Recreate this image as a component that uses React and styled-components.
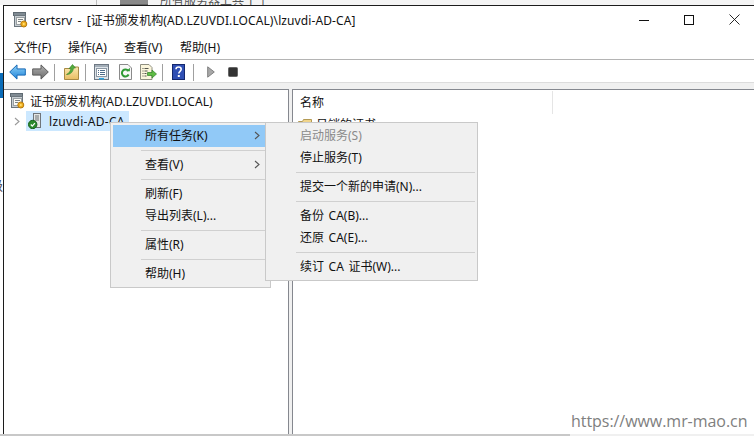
import React from "react";
import styled, { createGlobalStyle } from "styled-components";

const Global = createGlobalStyle`
  html, body { margin: 0; padding: 0; background: #fff; }
  body { width: 754px; height: 436px; overflow: hidden; font-family: "Noto Sans", "Noto Sans CJK SC", sans-serif; font-size: 12px; color: #111; }
  #root { width: 754px; height: 436px; }
`;
const Page = styled.div`position: relative; width: 754px; height: 436px; display: flex; flex-direction: column; overflow: hidden; background: #fff;`;
const BackTop = styled.div`height: 5px; flex: none; display: flex; align-items: flex-end; overflow: hidden; background: #f4f4f4; padding-left: 96px;`;
const BackRule = styled.div`width: 1px; height: 5px; background: #bdbdbd; margin-right: 23px;`;
const BackIcon = styled.div`width: 28px; height: 5px; background: #8a8a8a; margin-right: 12px; border-bottom: 1px solid #666; box-sizing: border-box;`;
const BackText = styled.div`font-size: 12px; line-height: 14px; color: #555; white-space: nowrap; flex: none; margin-bottom: -3px;`;
const Middle = styled.div`flex: 1; min-height: 0; display: flex;`;
const BackLeft = styled.div`width: 3px; flex: none; display: flex; flex-direction: column; align-items: flex-end; overflow: hidden; background: #fff;`;
const BackBlue = styled.div`width: 3px; height: 25px; margin-top: 68px; background: #0b6cb8; flex: none;`;
const BackGlyph = styled.div`margin-top: 79px; font-size: 13px; line-height: 16px; color: #445; flex: none; width: 13px;`;
const Win = styled.div`flex: 1; min-width: 0; display: flex; flex-direction: column; background: #fff; border-top: 1px solid #1c1c1c; border-left: 1px solid #1c1c1c;`;
const TitleBar = styled.div`height: 28px; flex: none; display: flex; align-items: center; padding-left: 9px;`;
const TitleText = styled.div`margin-left: 5px; font-size: 12px; letter-spacing: 0.1px; word-spacing: 2px; white-space: nowrap; flex: 1; margin-top: -1px;`;
const WinButtons = styled.div`display: flex; align-items: center; gap: 35px; padding-right: 14px; margin-top: -1px;`;
const MenuBar = styled.div`height: 25px; flex: none; display: flex; align-items: center; gap: 16px; padding-left: 10px; border-bottom: 1px solid #b4b4b4;`;
const MenuItem = styled.div`width: ${p => p.$w}px; white-space: nowrap; font-size: 12px;`;
const ToolBar = styled.div`height: 23px; box-sizing: border-box; padding-top: 2px; flex: none; display: flex; align-items: center; padding-left: 5px; border-bottom: 1px solid #dcdcdc;`;
const ToolSep = styled.div`width: 1px; height: 17px; background: #a0a0a0; margin: 0 ${p => p.$r}px 0 ${p => p.$l}px;`;
const ToolSlot = styled.div`display: flex; margin-left: ${p => p.$l || 0}px;`;
const Gap = styled.div`height: 6px; flex: none; background: #f0f0f0;`;
const Panels = styled.div`flex: 1; min-height: 0; display: flex; background: #f0f0f0; `;
const LeftPane = styled.div`width: 284px; flex: none; background: #fff; border-top: 1px solid #85888f; border-right: 1px solid #85888f;`;
const TreeRoot = styled.div`height: 21px; display: flex; align-items: center; padding-left: 6px; gap: 5px; white-space: nowrap; font-size: 12px; letter-spacing: 0.1px;`;
const TreeChild = styled.div`height: 20px; display: flex; align-items: center; padding-left: 10px;`;
const Selected = styled.div`width: 103px; height: 20px; margin-left: 6px; background: #cce8ff; display: flex; align-items: center; padding-left: 2px; box-sizing: border-box; gap: 8px; white-space: nowrap; font-size: 12px; letter-spacing: 0.3px;`;
const RightPane = styled.div`flex: 1; min-width: 0; margin-left: 3px; background: #fff; border-top: 1px solid #85888f; border-left: 1px solid #85888f;`;
const HeaderRow = styled.div`height: 25px; display: flex; align-items: center; padding-left: 7px;`;
const HeaderCell = styled.div`width: 253px; height: 23px; padding-bottom: 2px; box-sizing: border-box; display: flex; align-items: center; border-right: 1px solid #e5e5e5; font-size: 12px;`;
const ListRow = styled.div`height: 18px; display: flex; align-items: center; padding-left: 5px; gap: 4px; font-size: 12px; white-space: nowrap;`;
const BottomEdge = styled.div`height: 2px; flex: none; background: #c8c8c8;`;
const Menu = styled.div`position: absolute; left: ${p => p.$x}px; top: ${p => p.$y}px; width: ${p => p.$w}px; box-sizing: border-box; background: #f0f0f0; border: 1px solid #c9c9c9; padding: 2px; z-index: ${p => p.$z};`;
const Row = styled.div`height: 22px; box-sizing: border-box; padding: 0 8px 2px 32px; display: flex; align-items: center; justify-content: space-between; font-size: 12px; white-space: nowrap; word-spacing: 1.5px; color: ${p => p.$dim ? "#8a8a8a" : "#111"}; background: ${p => p.$active ? "#91c9f7" : "transparent"};`;
const Sep = styled.div`height: 1px; margin: 3px 0 3px 28px; background: #d0d0d0;`;
const Watermark = styled.div`position: absolute; left: 570px; top: 411px; width: 184px; height: 23px; background: #fff; color: #808080; font-size: 16px; line-height: 21px; padding-left: 1px; letter-spacing: -0.05px; white-space: nowrap; box-sizing: border-box; z-index: 9; font-family: "Open Sans", sans-serif;`;
const WatermarkEdge = styled.div`position: absolute; left: 570px; top: 434px; width: 184px; height: 2px; background: #f0f0f0; z-index: 9;`;

const Svg = ({ w, h, children }) => <svg width={w} height={h} viewBox={`0 0 ${w} ${h}`} style={{ display: "block", flex: "none" }}>{children}</svg>;

const Defs = () => (
  <svg width="0" height="0" style={{ position: "absolute" }}>
    <defs>
      <linearGradient id="blue" x1="0" y1="0" x2="0" y2="1"><stop offset="0" stopColor="#8fd2f8" /><stop offset="1" stopColor="#1f82d8" /></linearGradient>
      <linearGradient id="gray" x1="0" y1="0" x2="0" y2="1"><stop offset="0" stopColor="#b0b0b0" /><stop offset="1" stopColor="#6c6c6c" /></linearGradient>
      <linearGradient id="tan" x1="0" y1="0" x2="0" y2="1"><stop offset="0" stopColor="#fbe9b0" /><stop offset="1" stopColor="#e8bd62" /></linearGradient>
    </defs>
  </svg>
);

const Cert = () => (
  <Svg w={15} h={16}>
    <rect x=".5" y=".5" width="12" height="3" fill="#808b93" stroke="#5f6a72" />
    <rect x="1.5" y="3.5" width="11" height="11" fill="#c7ced3" stroke="#6b757c" />
    <rect x="3.5" y="5.5" width="8" height="7" fill="#fbfbf6" stroke="#9aa0a4" />
    <path d="M5 7.5h5M5 9.5h3" stroke="#7d8386" />
    <circle cx="10.8" cy="12" r="3" fill="#f0b020" stroke="#b77a10" />
    <circle cx="10.8" cy="12" r="1" fill="#ffe27a" />
  </Svg>
);
const Server = () => (
  <Svg w={13} h={16}>
    <rect x="5.5" y=".5" width="7" height="14" fill="#e4e6e4" stroke="#70757a" />
    <path d="M7 3h4M7 5h4M7 7h4" stroke="#6d7275" />
    <circle cx="4.7" cy="11.5" r="4.2" fill="#2c8a2c" stroke="#17611b" />
    <path d="M2.8 11.5l1.5 1.6 2.6-3" stroke="#fff" strokeWidth="1.2" fill="none" />
  </Svg>
);
const ArrowBack = () => (
  <Svg w={17} h={16}>
    <path d="M.7 8L8 .9v4h8.300v6.200H8v4z" fill="url(#blue)" stroke="#1769b5" strokeLinejoin="round" />
  </Svg>
);
const ArrowForward = () => (
  <Svg w={17} h={16}>
    <path d="M16.300 8L9 .9v4H.7v6.200H9v4z" fill="url(#gray)" stroke="#5a5a5a" strokeLinejoin="round" />
  </Svg>
);
const FolderUp = () => (
  <Svg w={15} h={16}>
    <path d="M.5 4.500h5.500l1.200-1.500h7.300v12.500H.5z" fill="url(#tan)" stroke="#a88a45" />
    <path d="M2.500 10.500C5 9.500 6.500 7 7 4.300L5 4.700 8.500.5l3 3.500-2 .1C9 7.500 7 10.500 2.500 10.500z" fill="#55ad3f" stroke="#2f7f27" strokeWidth=".6" />
  </Svg>
);
const Properties = () => (
  <Svg w={15} h={16}>
    <rect x=".5" y=".5" width="14" height="15" fill="#dde3e9" stroke="#6e7883" />
    <rect x="1" y="1" width="13" height="2" fill="#a3aeb8" />
    <rect x="2.5" y="4.5" width="10" height="8" fill="#fff" stroke="#8c98a4" />
    <path d="M4 6.500h1M6 6.500h5M4 8.500h1M6 8.500h5M4 10.500h1M6 10.500h5" stroke="#4e6c8a" />
    <rect x="5" y="14" width="5" height="1.500" fill="#2aa3e0" />
  </Svg>
);
const Refresh = () => (
  <Svg w={13} h={16}>
    <path d="M.5.5h8.500l3.500 3.500v11.500H.5z" fill="#f8f8f8" stroke="#8a8a8a" />
    <path d="M9.300 7a3.500 3.500 0 1 0 .3 3.500" fill="none" stroke="#2f9a35" strokeWidth="2" />
    <path d="M7.300 7.300h3.600V3.700z" fill="#2f9a35" />
  </Svg>
);
const ExportList = () => (
  <Svg w={17} h={16}>
    <path d="M.5.5h8.500l3 3v12H.5z" fill="#fbf6dc" stroke="#8f8f80" />
    <path d="M2.500 4.500h1M4.500 4.500h4M2.500 7h1M4.500 7h3M2.500 9.500h1M4.500 9.500h2M2.500 12h1M4.500 12h2" stroke="#55554c" />
    <path d="M7.500 8.500h4.500V6l4.500 4-4.500 4v-2.500H7.500z" fill="#5fbc45" stroke="#2f8125" strokeWidth=".7" />
  </Svg>
);
const Help = () => (
  <Svg w={13} h={16}>
    <rect x=".5" y=".5" width="12" height="15" fill="#2f4fb4" stroke="#14286e" />
    <path d="M4 5.200c0-3 5.200-3 5.200 0 0 2-2.400 2.200-2.400 4.300" fill="none" stroke="#fff" strokeWidth="1.600" />
    <rect x="5.800" y="11" width="2" height="2" fill="#fff" />
  </Svg>
);
const Play = () => (
  <Svg w={8} h={12}>
    <path d="M.7.800L7.300 6 .7 11.200z" fill="#a8a8a8" stroke="#808080" />
  </Svg>
);
const Stop = () => (
  <Svg w={10} h={10}>
    <rect x=".5" y=".5" width="9" height="9" rx="1" fill="#333" stroke="#666" />
  </Svg>
);
const Chevron = ({ c = "#555", w = 6, h = 9 }) => (
  <Svg w={w} h={h}>
    <path d={`M1 1l${w - 2} ${(h - 2) / 2}L1 ${h - 1}`} fill="none" stroke={c} strokeWidth="1.100" />
  </Svg>
);
const Folder = () => (
  <Svg w={14} h={10}>
    <path d="M.5 2.500h4l1-2h8v9.500H.5z" fill="#f0d48a" stroke="#b39a55" />
  </Svg>
);
const MinI = () => <Svg w={10} h={10}><path d="M0 5.500h10" stroke="#111" /></Svg>;
const MaxI = () => <Svg w={10} h={10}><rect x=".5" y=".5" width="9" height="9" fill="none" stroke="#111" /></Svg>;
const CloseI = () => <Svg w={11} h={11}><path d="M.5.500l10 10M10.500.500l-10 10" stroke="#111" strokeWidth=".9" /></Svg>;

export default function App() {
  return (
    <Page>
      <Global />
      <Defs />
      <BackTop>
        <BackRule />
        <BackIcon />
        <BackText>所有服务器上共 1 个</BackText>
      </BackTop>
      <Middle>
        <BackLeft>
          <BackBlue />
          <BackGlyph>级</BackGlyph>
        </BackLeft>
        <Win>
          <TitleBar>
            <Cert />
            <TitleText>certsrv - [证书颁发机构(AD.LZUVDI.LOCAL)\lzuvdi-AD-CA]</TitleText>
            <WinButtons>
              <MinI />
              <MaxI />
              <CloseI />
            </WinButtons>
          </TitleBar>
          <MenuBar>
            <MenuItem $w={38}>文件(F)</MenuItem>
            <MenuItem $w={40}>操作(A)</MenuItem>
            <MenuItem $w={40}>查看(V)</MenuItem>
            <MenuItem $w={40}>帮助(H)</MenuItem>
          </MenuBar>
          <ToolBar>
            <ArrowBack />
            <ToolSlot $l={6}><ArrowForward /></ToolSlot>
            <ToolSep $l={5} $r={9} />
            <FolderUp />
            <ToolSep $l={6} $r={8} />
            <Properties />
            <ToolSlot $l={10}><Refresh /></ToolSlot>
            <ToolSlot $l={8}><ExportList /></ToolSlot>
            <ToolSep $l={5} $r={9} />
            <Help />
            <ToolSep $l={8} $r={13} />
            <Play />
            <ToolSlot $l={13}><Stop /></ToolSlot>
          </ToolBar>
          <Gap />
          <Panels>
            <LeftPane>
              <TreeRoot><Cert />证书颁发机构(AD.LZUVDI.LOCAL)</TreeRoot>
              <TreeChild>
                <Chevron c="#9a9a9a" />
                <Selected><Server />lzuvdi-AD-CA</Selected>
              </TreeChild>
            </LeftPane>
            <RightPane>
              <HeaderRow><HeaderCell>名称</HeaderCell></HeaderRow>
              <ListRow><Folder />吊销的证书</ListRow>
            </RightPane>
          </Panels>
        </Win>
      </Middle>
      <BottomEdge />
      <Menu $x={110} $y={122} $w={161} $z={2}>
        <Row $active>所有任务(K)<Chevron /></Row>
        <Sep />
        <Row>查看(V)<Chevron /></Row>
        <Sep />
        <Row>刷新(F)</Row>
        <Row>导出列表(L)...</Row>
        <Sep />
        <Row>属性(R)</Row>
        <Sep />
        <Row>帮助(H)</Row>
      </Menu>
      <Menu $x={265} $y={122} $w={213} $z={3}>
        <Row $dim>启动服务(S)</Row>
        <Row>停止服务(T)</Row>
        <Sep />
        <Row>提交一个新的申请(N)...</Row>
        <Sep />
        <Row>备份 CA(B)...</Row>
        <Row>还原 CA(E)...</Row>
        <Sep />
        <Row>续订 CA 证书(W)...</Row>
      </Menu>
      <Watermark>https://www.mr-mao.cn</Watermark>
      <WatermarkEdge />
    </Page>
  );
}
